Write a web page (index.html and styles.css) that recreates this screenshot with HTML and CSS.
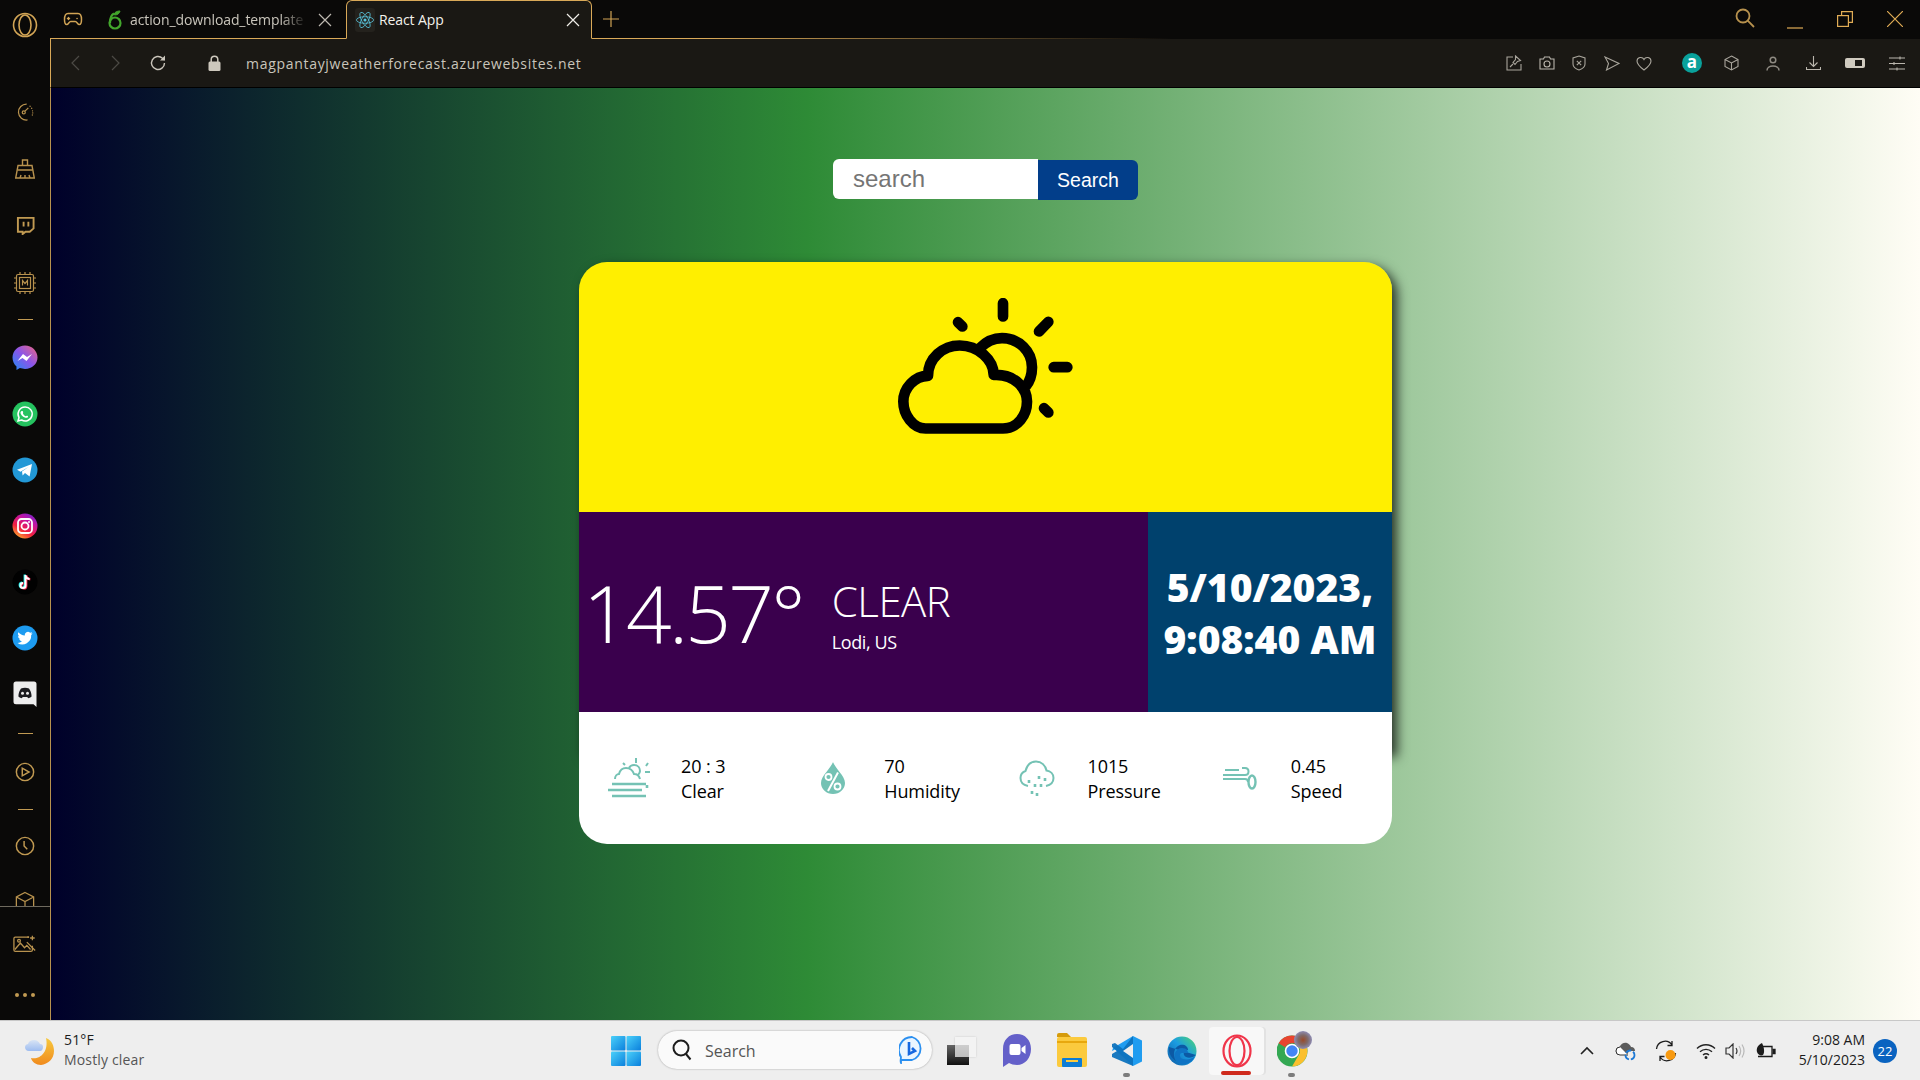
FILE: index.html
```html
<!DOCTYPE html>
<html lang="en">
<head>
<meta charset="utf-8">
<title>React App</title>
<link rel="stylesheet" href="styles.css">
</head>
<body>
<div class="desktop">
  <div class="browser">
    <aside class="sidebar">
      <div class="logo-cell">
        <svg width="26" height="26" viewBox="0 0 26 26" fill="none" stroke="#d1a455" stroke-width="1.6"><circle cx="13" cy="13" r="11.5"/><ellipse cx="13" cy="13" rx="6" ry="10"/></svg>
      </div>
      <div class="side-scroll">
        <div class="side-item tall"><svg width="20" height="20" viewBox="0 0 24 24" fill="none" stroke="#b8924e" stroke-width="1.5"><path d="M15 21.500A9.500 9.500 0 1 1 14 2.600"/><circle cx="10.500" cy="12.500" r="1.800"/><path d="M12 11l4-4"/><path d="M18 5l.1.1M20 7.500l.1.1M21 10.500v.1M21.300 13v.1M20.800 15.500v.1" stroke-linecap="round"/></svg></div>
        <div class="side-item tall"><svg width="20" height="20" viewBox="0 0 20 20" fill="none" stroke="#b8924e" stroke-width="1.400"><path d="M7.500 6V1h5v5M3 6.500h14l2.300 12.500H.7z"/><path d="M2.500 11h15M5 19l1-3M10 19v-3M15 19l-1-3"/></svg></div>
        <div class="side-item tall"><svg width="19" height="19" viewBox="0 0 20 20" fill="none" stroke="#c19a52" stroke-width="2"><path d="M2 2h16.500v11l-4 3.500H10L7 19v-2.500H2z"/><path d="M8 6v5M13 6v5"/></svg></div>
        <div class="side-item tall chip"><svg width="24" height="24" viewBox="0 0 24 24" fill="none" stroke="#b8924e" stroke-width="1.200"><rect x="3.500" y="3.500" width="17" height="17" rx="1.500"/><rect x="6.500" y="6.500" width="11" height="11"/><path d="M7 3.500V1M12 3.500V1M17 3.500V1M7 23v-2.500M12 23v-2.500M17 23v-2.500M3.500 7H1M3.500 12H1M3.500 17H1M23 7h-2.500M23 12h-2.500M23 17h-2.500M9.500 14.500v-5l2.500 3 2.500-3v5"/></svg></div>
        <div class="side-sep first"></div>
        <div class="side-item"><svg width="26" height="26" viewBox="0 0 26 26"><defs><linearGradient id="ms" x1="0" y1="1" x2="1" y2="0"><stop offset="0" stop-color="#1f8cf5"/><stop offset=".5" stop-color="#8a55ea"/><stop offset="1" stop-color="#f0667f"/></linearGradient></defs><path d="M13 .5C6 .5.5 5.500.5 12.500c0 3.600 1.500 6.800 4 9V25l3.400-1.900c1.600.5 3.300.8 5.100.8 7 0 12.500-5 12.500-11.400S20 .5 13 .5z" fill="url(#ms)"/><path d="M5.500 16l5.500-7 4 3 5-3-5.500 7-4-3z" fill="#fff"/></svg></div>
        <div class="side-item"><svg width="26" height="26" viewBox="0 0 26 26"><circle cx="13" cy="13" r="12.500" fill="#25c25f"/><path d="M13 6a7 7 0 0 0-6 10.500L6 20l3.600-1A7 7 0 1 0 13 6z" fill="none" stroke="#fff" stroke-width="1.500"/><path d="M10.300 10c1 0 1 2 .6 2.500.6 1.300 1.500 2.200 2.700 2.700.6-.6 1.300-.8 2.300-.2.5.8-.3 1.800-1.400 1.800-3 0-6-3-6-5.300 0-.8.800-1.500 1.800-1.500z" fill="#fff"/></svg></div>
        <div class="side-item"><svg width="26" height="26" viewBox="0 0 26 26"><circle cx="13" cy="13" r="12.500" fill="#2298d6"/><path d="M5 12.800L20 7l-2.400 12.500-4.600-3.400-2.400 2.300-.6-4L16.500 10l-8 4.800z" fill="#fff"/></svg></div>
        <div class="side-item"><svg width="26" height="26" viewBox="0 0 26 26"><defs><linearGradient id="ig" x1="0.200" y1="1" x2="0.800" y2="0"><stop offset="0" stop-color="#fdb32c"/><stop offset=".35" stop-color="#f3203f"/><stop offset=".7" stop-color="#c414a0"/><stop offset="1" stop-color="#7a25d0"/></linearGradient></defs><circle cx="13" cy="13" r="12.500" fill="url(#ig)"/><rect x="6" y="6" width="14" height="14" rx="3.500" fill="none" stroke="#fff" stroke-width="1.800"/><circle cx="13" cy="13" r="3.500" fill="none" stroke="#fff" stroke-width="1.800"/><circle cx="17" cy="9" r="1" fill="#fff"/></svg></div>
        <div class="side-item"><svg width="26" height="26" viewBox="0 0 26 26"><circle cx="13" cy="13" r="12.500" fill="#010101"/><path d="M13.500 6v10.500a2.500 2.500 0 1 1-2.500-2.500M13.500 6c.3 2.500 1.800 3.800 4 4" fill="none" stroke="#25f4ee" stroke-width="2.200" transform="translate(-.8 -.4)"/><path d="M13.500 6v10.500a2.500 2.500 0 1 1-2.500-2.500M13.500 6c.3 2.500 1.800 3.800 4 4" fill="none" stroke="#fe2c55" stroke-width="2.200" transform="translate(.8 .4)"/><path d="M13.500 6v10.500a2.500 2.500 0 1 1-2.500-2.500M13.500 6c.3 2.500 1.800 3.800 4 4" fill="none" stroke="#fff" stroke-width="2"/></svg></div>
        <div class="side-item"><svg width="26" height="26" viewBox="0 0 26 26"><circle cx="13" cy="13" r="12.500" fill="#1d9bf0"/><path d="M20.500 8.300c-.6.300-1.200.4-1.800.5.600-.4 1.100-1 1.400-1.700-.6.300-1.300.6-2 .7a3.100 3.100 0 0 0-5.300 2.800c-2.600-.1-4.900-1.400-6.400-3.300-.8 1.400-.4 3.200 1 4.100-.5 0-1-.1-1.400-.4 0 1.500 1.100 2.800 2.500 3.100-.5.100-.9.100-1.400 0 .4 1.200 1.500 2.100 2.900 2.200A6.300 6.300 0 0 1 5.500 18a8.900 8.900 0 0 0 13.700-7.900c.5-.5 1-1.100 1.300-1.800z" fill="#fff"/></svg></div>
        <div class="side-item"><svg width="24" height="26" viewBox="0 0 24 26"><path d="M3 .5h18A2.500 2.500 0 0 1 23.500 3v23l-3-2.800H3A2.500 2.500 0 0 1 .5 20.700V3A2.500 2.500 0 0 1 3 .5z" fill="#ededed"/><path d="M8 7.500c2.500-1 5.500-1 8 0 1.500 2 2.600 4.800 2.600 8-1.200 1-2.500 1.500-3.500 1.700l-.8-1.200H9.700l-.8 1.200c-1-.2-2.300-.7-3.500-1.700 0-3.200 1.100-6 2.600-8z" fill="#1c1c20"/><circle cx="9.500" cy="12.300" r="1.500" fill="#ededed"/><circle cx="14.500" cy="12.300" r="1.500" fill="#ededed"/></svg></div>
        <div class="side-sep wide"></div>
        <div class="side-item"><svg width="20" height="20" viewBox="0 0 22 22" fill="none" stroke="#c19a52" stroke-width="1.600"><circle cx="11" cy="11" r="9.500"/><path d="M8 6.800v8.400l7.500-4.200z"/></svg></div>
        <div class="side-sep mid"></div>
        <div class="side-item"><svg width="20" height="20" viewBox="0 0 22 22" fill="none" stroke="#c19a52" stroke-width="1.600"><circle cx="11" cy="11" r="9.500"/><path d="M10 5.500V11l3.500 3.500"/></svg></div>
        <div class="side-item"><svg width="20" height="22" viewBox="0 0 22 24" fill="none" stroke="#b8924e" stroke-width="1.400"><path d="M11 1.500l9.500 5V18L11 23l-9.500-5V6.500zM1.500 6.500L11 11.500l9.500-5M11 11.500V23"/></svg></div>
      </div>
      <div class="side-bottom">
        <div class="side-item"><svg width="24" height="20" viewBox="0 0 26 20" fill="none" stroke="#b8924e" stroke-width="1.400"><path d="M17 2.500H2.500A1.500 1.500 0 0 0 1 4v12.500A1.500 1.500 0 0 0 2.500 18h17a1.500 1.500 0 0 0 1.500-1.500V12"/><path d="M2 16l6-7 4.500 5 2.500-2.500 4 4.500"/><circle cx="6.500" cy="6.500" r="1.500"/><path d="M15 8l9 9M21 1v5M18.500 3.500h5M16.500 1.500v2M15.500 2.500h2"/></svg></div>
        <div class="dots"><i></i><i></i><i></i></div>
      </div>
    </aside>
    <div class="main">
      <header class="tabstrip">
        <div class="game-cell"><svg width="20" height="14" viewBox="0 0 20 14" fill="none" stroke="#d1a455" stroke-width="1.500"><path d="M5 1.500h10c2 0 3.500 2 3.500 6 0 2.500-.5 5-2.200 5-1.800 0-2.300-3-4-3H7.700c-1.700 0-2.200 3-4 3-1.700 0-2.200-2.500-2.200-5 0-4 1.500-6 3.500-6z"/><path d="M5.500 5.500v2M4.500 6.500h2M14 6.500h.1" stroke-linecap="round"/></svg></div>
        <div class="tab">
          <svg class="tab-fav" width="16" height="20" viewBox="0 0 16 20" fill="none" stroke="#43a62c" stroke-width="2.200"><circle cx="8" cy="13" r="5.500"/><path d="M3 13c0-5 1-8 4-9.500"/><path d="M7 4c1-2 3-3 6-3-.5 2.500-2.500 4-5.500 4z" fill="#43a62c" stroke-width="1"/></svg>
          <span class="tab-title fade">action_download_template</span>
          <svg class="tab-x" width="14" height="14" viewBox="0 0 14 14" stroke="#bdb9b1" stroke-width="1.200"><path d="M1 1l12 12M13 1L1 13"/></svg>
        </div>
        <div class="tab active">
          <span class="fav-box"><svg width="18" height="18" viewBox="-11.500 -10.230 23 20.460" fill="none" stroke="#58c4dc"><circle r="2" fill="#58c4dc" stroke="none"/><ellipse rx="11" ry="4.200"/><ellipse rx="11" ry="4.200" transform="rotate(60)"/><ellipse rx="11" ry="4.200" transform="rotate(120)"/></svg></span>
          <span class="tab-title light">React App</span>
          <svg class="tab-x" width="14" height="14" viewBox="0 0 14 14" stroke="#f0eee8" stroke-width="1.200"><path d="M1 1l12 12M13 1L1 13"/></svg>
        </div>
        <svg class="tab-plus" width="16" height="16" viewBox="0 0 16 16" stroke="#d1a455" stroke-width="1.200"><path d="M8 0v16M0 8h16"/></svg>
        <div class="win-controls">
          <svg width="20" height="20" viewBox="0 0 20 20" fill="none" stroke="#b8924e" stroke-width="1.800"><circle cx="8" cy="8" r="6.500"/><path d="M12.700 12.700L19 19"/></svg>
          <svg width="16" height="16" viewBox="0 0 16 16" stroke="#e0ac55" stroke-width="1.200"><path d="M0 15h16"/></svg>
          <svg width="16" height="16" viewBox="0 0 16 16" fill="none" stroke="#e0ac55" stroke-width="1.200"><rect x=".6" y="4.600" width="10.800" height="10.800"/><path d="M4.600 4.600V.6h10.800v10.800h-4"/></svg>
          <svg width="16" height="16" viewBox="0 0 16 16" stroke="#e0ac55" stroke-width="1.200"><path d="M0 0l16 16M16 0L0 16"/></svg>
        </div>
      </header>
      <nav class="toolbar">
        <svg class="nav-back" width="10" height="16" viewBox="0 0 10 16" fill="none" stroke="#4c4a45" stroke-width="1.200"><path d="M9 1L2 8l7 7"/></svg>
        <svg class="nav-fwd" width="10" height="16" viewBox="0 0 10 16" fill="none" stroke="#4c4a45" stroke-width="1.200"><path d="M1 1l7 7-7 7"/></svg>
        <svg class="nav-reload" width="18" height="18" viewBox="0 0 18 18" fill="none" stroke="#cbc6bc" stroke-width="1.400"><path d="M15.500 9a6.500 6.500 0 1 1-2-4.700L15.500 6"/><path d="M16 1.500V6.500h-5" fill="#cbc6bc" stroke="none"/></svg>
        <svg class="nav-lock" width="13" height="16" viewBox="0 0 13 16"><rect x="0.500" y="6.500" width="12" height="9.500" rx="1.500" fill="#cdc8bd"/><path d="M3.200 7V4.500a3.300 3.300 0 0 1 6.600 0V7" fill="none" stroke="#cdc8bd" stroke-width="1.500"/></svg>
        <span class="url">magpantayjweatherforecast.azurewebsites.net</span>
        <div class="tools">
          <svg width="16" height="16" viewBox="0 0 16 16" fill="none" stroke="#a9a59c" stroke-width="1.100"><path d="M7 2H1v13h14V9"/><path d="M9.500 1l5 4.500-3 1-2.500 3-2-2 2.500-3zM7 9l-3 3"/></svg>
          <svg width="16" height="14" viewBox="0 0 16 14" fill="none" stroke="#bab6ad" stroke-width="1.100"><path d="M1 3h3.500l1-2h5l1 2H15v10H1z"/><circle cx="8" cy="8" r="3"/></svg>
          <svg width="14" height="16" viewBox="0 0 14 16" fill="none" stroke="#a9a59c" stroke-width="1.100"><path d="M7 1l6 2v6c0 3-3 5-6 6-3-1-6-3-6-6V3z"/><path d="M4.800 5.800l4.400 4.400M9.200 5.800l-4.400 4.400"/></svg>
          <svg width="16" height="15" viewBox="0 0 16 15" fill="none" stroke="#a9a59c" stroke-width="1.100"><path d="M1 1l14 6.500L2.500 14 4.500 7.500z"/></svg>
          <svg width="16" height="15" viewBox="0 0 16 15" fill="none" stroke="#a9a59c" stroke-width="1.100"><path d="M8 14C4 11 1 8.500 1 5a3.700 3.700 0 0 1 7-1.500A3.700 3.700 0 0 1 15 5c0 3.500-3 6-7 9z"/></svg>
          <span class="ext-a">a</span>
          <svg width="15" height="16" viewBox="0 0 15 16" fill="none" stroke="#a9a59c" stroke-width="1.100"><path d="M7.500 1l6.500 3.500v7L7.500 15 1 11.500v-7zM1 4.500L7.500 8 14 4.500M7.500 8v7"/></svg>
          <svg width="14" height="15" viewBox="0 0 14 15" fill="none" stroke="#8e8a82" stroke-width="1.500"><circle cx="7" cy="4" r="2.800"/><path d="M1 14.500c0-6 12-6 12 0"/></svg>
          <svg width="15" height="16" viewBox="0 0 15 16" fill="none" stroke="#bab6ad" stroke-width="1.100"><path d="M7.500 1v10M3.500 7.500l4 4 4-4M.5 12v2.500h14V12"/></svg>
          <span class="battery"><i></i></span>
          <svg width="16" height="15" viewBox="0 0 16 15" fill="none" stroke="#bab6ad" stroke-width="1.100"><path d="M0 2h16M0 7.500h16M0 13h16M11 .5v3M5 6v3M8 11.500v3"/></svg>
        </div>
      </nav>
      <main class="page">
        <form class="search">
          <input class="search-input" type="text" placeholder="search">
          <button class="search-btn" type="button">Search</button>
        </form>
        <section class="card">
          <div class="card-hero">
            <svg width="175" height="136" viewBox="295 475 525 407" fill="none" stroke="#000" stroke-width="32" stroke-linecap="round"><path d="M378 866H610C655 866 682 825 682 785C682 745 645 705 590 705H582C582 660 535 617 480 617C430 617 385 655 385 708C345 708 311 745 311 785C311 825 340 866 378 866Z" stroke-linejoin="round"/><path d="M540 625C560 605 585 595 607 595C658 595 697 635 697 682C697 705 690 725 678 740" stroke-linecap="butt"/><path d="M610 490V530M475 547L488 560M746 546L718 575M762 682H803M733 805L746 818"/></svg>
          </div>
          <div class="card-mid">
            <div class="now">
              <span class="temp">14.57°</span>
              <div class="cond">
                <span class="cond-name">CLEAR</span>
                <span class="cond-place">Lodi, US</span>
              </div>
            </div>
            <div class="clock">5/10/2023,<br>9:08:40 AM</div>
          </div>
          <div class="card-stats">
            <div class="stat">
              <div class="stat-icon"><svg width="46" height="40" viewBox="0 0 46 40" fill="none" stroke="#74c2b4" stroke-width="2"><path d="M8 21c0-3 2-5 4-5 1-4 4-6 7-6 4 0 7 3 8 6 3 0 5 1 6 5"/><path d="M22 10c1-2 3-3 5-3 4 0 6 3 6 6 0 2-1 3-2 4"/><path d="M29 0v5M16 5l2 2M41 5l-2 3M38 14h5"/><path d="M5 26h34M1 32h34M5 38h34M40 27v3" stroke-width="2.600"/></svg></div>
              <div class="stat-text"><span>20 : 3</span><span>Clear</span></div>
            </div>
            <div class="stat">
              <div class="stat-icon"><svg width="24" height="32" viewBox="0 0 24 32"><path d="M12 0C10 6 0 14 0 21a12 11 0 0 0 24 0C24 14 14 6 12 0z" fill="#74c2b4"/><circle cx="7.500" cy="15" r="3" fill="none" stroke="#fff" stroke-width="1.800"/><circle cx="16.500" cy="24.500" r="3" fill="none" stroke="#fff" stroke-width="1.800"/><path d="M17 10.500L7 29" stroke="#fff" stroke-width="2"/></svg></div>
              <div class="stat-text"><span>70</span><span>Humidity</span></div>
            </div>
            <div class="stat">
              <div class="stat-icon"><svg width="36" height="36" viewBox="0 0 36 36" fill="none" stroke="#74c2b4" stroke-width="2"><path d="M9 26C4 25 1.500 22 1.500 18c0-3.500 2-6 5-7C8 5 12 1.500 17 1.500c5.500 0 9.500 4 10.500 9 4 .5 7 3.500 7 7.500 0 4-3 7-7.500 8"/><path d="M10 20v3M20 16v3M26 18v3M16 24v3M22 24v3M13 31v3M18 33v3" stroke-width="2.600"/></svg></div>
              <div class="stat-text"><span>1015</span><span>Pressure</span></div>
            </div>
            <div class="stat">
              <div class="stat-icon"><svg width="34" height="24" viewBox="0 0 34 24" fill="none" stroke="#74c2b4" stroke-width="2"><path d="M0 9h22c2.500 0 3.500-1.500 3.500-3.500S24 2 22 2h-3M2 4h14M0 13h22c2 0 3 1 3 3"/><ellipse cx="29" cy="16" rx="3.500" ry="6.500" stroke-width="2.400"/></svg></div>
              <div class="stat-text"><span>0.45</span><span>Speed</span></div>
            </div>
          </div>
        </section>
      </main>
    </div>
  </div>
  <footer class="taskbar">
    <div class="tb-weather">
      <svg width="30" height="30" viewBox="0 0 30 30"><defs><linearGradient id="moon" x1="0" y1="0" x2="0" y2="1"><stop offset="0" stop-color="#f7c93e"/><stop offset="1" stop-color="#f08a1d"/></linearGradient><linearGradient id="cl" x1="0" y1="0" x2="0" y2="1"><stop offset="0" stop-color="#d8e4f5"/><stop offset="1" stop-color="#9dbcf0"/></linearGradient></defs><path d="M21 2c6 2 8 8 8 13 0 8-6 13-13 14-5 0-9-3-10-7 9 2 18-6 15-20z" fill="url(#moon)"/><path d="M4 15C1 15 0 13 0 11c0-2 2-3 3-3 1-3 3-4 6-4 3 0 5 2 6 4 2 0 3 1 3 3s-1 4-3 4z" fill="url(#cl)"/></svg>
      <div class="tb-weather-text"><span class="tb-temp">51°F</span><span class="tb-desc">Mostly clear</span></div>
    </div>
    <svg class="tb-start" width="30" height="30" viewBox="0 0 30 30"><defs><linearGradient id="w1" x1="0" y1="0" x2="1" y2="1"><stop offset="0" stop-color="#4bd1fa"/><stop offset="1" stop-color="#0a7fdc"/></linearGradient></defs><rect x="0" y="0" width="14.500" height="14.500" rx="1" fill="url(#w1)"/><rect x="15.500" y="0" width="14.500" height="14.500" rx="1" fill="url(#w1)"/><rect x="0" y="15.500" width="14.500" height="14.500" rx="1" fill="url(#w1)"/><rect x="15.500" y="15.500" width="14.500" height="14.500" rx="1" fill="url(#w1)"/></svg>
    <div class="tb-search">
      <svg width="20" height="22" viewBox="0 0 20 22" fill="none" stroke="#1d1d1d" stroke-width="2"><circle cx="9" cy="9" r="7.500"/><path d="M14 15l4.500 5.500"/></svg>
      <span class="tb-search-text">Search</span>
      <svg class="tb-bing" width="26" height="28" viewBox="0 0 26 28" fill="none"><path d="M13 1a12 12 0 0 1 0 23H2v3c-1-1 0-5 0-6A13 13 0 0 1 13 1z" stroke="#2a8ff0" stroke-width="1.800" fill="#eaf5ff"/><path d="M10 6v12l6-3-3-3" stroke="#1668e0" stroke-width="2.600"/></svg>
    </div>
    <div class="tb-apps">
      <div class="tb-app"><span class="taskview"><i></i><b></b></span></div>
      <div class="tb-app"><svg width="30" height="36" viewBox="0 0 30 36"><path d="M15 1C7 1 1 7 1 16v18l6-4c2 1 5 2 8 2 8 0 14-7 14-16S23 1 15 1z" fill="#6460c9"/><rect x="7.500" y="11" width="11" height="11" rx="2" fill="#fff"/><path d="M19.500 15l4-3v9l-4-3z" fill="#fff"/></svg></div>
      <div class="tb-app"><svg width="30" height="36" viewBox="0 0 30 36"><path d="M0 2a2 2 0 0 1 2-2h8l4 4H0z" fill="#d59b0b"/><rect x="0" y="4" width="30" height="30" rx="2" fill="#fbca3e"/><path d="M0 8h30v2H0z" fill="#e8a80e"/><rect x="5" y="25" width="20" height="9" rx="1" fill="#0c7cd5"/><rect x="9" y="27" width="12" height="2" fill="#fbca3e"/></svg></div>
      <div class="tb-app has-dot"><svg width="30" height="30" viewBox="0 0 30 30"><path d="M21 0l9 4.500v21L21 30 3 13.500 0 15l1-3 20-12z" fill="#1f9cf0"/><path d="M21 0v30L0 21V18L5 15 0 11V8l3-1 8 6 10-13z" fill="#0d72bd" fill-opacity=".95"/><path d="M21 8L11 15l10 7z" fill="#eeeeee"/></svg></div>
      <div class="tb-app"><svg width="30" height="30" viewBox="0 0 30 30"><defs><linearGradient id="ed" x1="0" y1="1" x2="1" y2="0"><stop offset="0" stop-color="#0c59a4"/><stop offset=".55" stop-color="#1b9de2"/><stop offset="1" stop-color="#50d96c"/></linearGradient></defs><circle cx="15" cy="15" r="14.500" fill="url(#ed)"/><path d="M29 19c-3 3-10 4-12 0-1-3 1-5 4-5 0-4-4-6-8-5-6 2-8 10-4 16-4-2-8-8-7-14" fill="#0c59a4"/><path d="M15 12c5 0 6 3 6 5h-6c-3 0-3 5 1 6 4 1 9 0 12-3-2 6-8 9-14 8-5-2-7-7-6-11 1-3 4-5 7-5z" fill="#0f73c4"/></svg></div>
      <div class="tb-app opera"><svg width="30" height="34" viewBox="0 0 30 34" fill="none" stroke="#f0354a" stroke-width="2.200"><ellipse cx="15" cy="17" rx="13.500" ry="15.500"/><ellipse cx="15" cy="17" rx="7.500" ry="14"/></svg><i class="run-bar"></i></div>
      <div class="tb-app has-dot"><svg class="chrome" width="36" height="40" viewBox="0 5 36 40"><defs><radialGradient id="av"><stop offset="0" stop-color="#9a4a2a"/><stop offset=".55" stop-color="#7f6a6a"/><stop offset="1" stop-color="#8f8db5"/></radialGradient></defs><circle cx="15" cy="25" r="15.500" fill="#34a853"/><path d="M15 9.500a15.500 15.500 0 0 1 13.400 7.800H15a7.700 7.700 0 0 0-6.700 3.900L1.600 17.300A15.500 15.500 0 0 1 15 9.500z" fill="#e8442f"/><path d="M28.400 17.300A15.500 15.500 0 0 1 15 40.500l6.700-11.600A7.700 7.700 0 0 0 22 21z" fill="#fbc02d"/><circle cx="15" cy="25" r="6.500" fill="#4285f4" stroke="#fff" stroke-width="1.600"/><circle cx="26" cy="14" r="9" fill="url(#av)"/></svg></div>
    </div>
    <div class="tray">
      <svg width="14" height="9" viewBox="0 0 14 9" fill="none" stroke="#222" stroke-width="1.600"><path d="M1 8l6-6 6 6"/></svg>
      <svg class="t-cloud" width="22" height="20" viewBox="0 0 22 20"><path d="M5 14a4 4 0 0 1-.5-8C6 2 10 1 12 2c2 1 3.500 2 4 4 3 0 4 2 4 4H14l-2 4z" fill="#5c5c5c"/><path d="M5 6a4 4 0 0 0 0 8h8" fill="#fff" stroke="#333"/><circle cx="15" cy="14" r="4.500" fill="none" stroke="#1b78d6" stroke-width="1.800" stroke-dasharray="6 2"/></svg>
      <svg class="t-sync" width="22" height="22" viewBox="0 0 22 22"><path d="M1.500 9A8.500 8.500 0 0 1 17 5M17 1v4.500h-4.500M20.500 13A8.500 8.500 0 0 1 5 17M5 21v-4.500h4.500" fill="none" stroke="#1c1c1c" stroke-width="1.300"/><circle cx="15.500" cy="15" r="5" fill="#f89a10"/></svg>
      <svg class="t-wifi" width="20" height="16" viewBox="0 0 20 16" fill="none" stroke="#222" stroke-width="1.400"><path d="M1 5.500c5-5 13-5 18 0M4 8.800c3.500-3.300 8.500-3.300 12 0M7 12c1.800-1.500 4.200-1.500 6 0"/><circle cx="10" cy="14.500" r=".8" fill="#222"/></svg>
      <svg class="t-sound" width="20" height="16" viewBox="0 0 20 16" fill="none" stroke="#333" stroke-width="1.200"><path d="M1 5h3l4-4v14l-4-4H1zM11 5c1.300 2 1.300 4 0 6"/><path d="M14 3c2 3 2 7 0 10M17 1.500c2.500 4 2.500 9 0 13" stroke="#b8b8b8"/></svg>
      <svg class="t-batt" width="20" height="16" viewBox="0 0 20 16" fill="none" stroke="#1c1c1c" stroke-width="1.300"><path d="M4 3.500h12v10H2"/><path d="M16.500 6.500h2.500v4h-2.500" fill="#1c1c1c"/><path d="M6 0C2 2 0 5 1 9c1 3 4 4 6 3 2-3 1-8-1-12z" fill="#1c1c1c" stroke="none"/></svg>
      <div class="tb-clock"><span>9:08 AM</span><span>5/10/2023</span></div>
      <span class="tb-badge">22</span>
    </div>
  </footer>
</div>
</body>
</html>
```

FILE: styles.css
```css
* { box-sizing: border-box; }
html, body { margin: 0; height: 100%; }
body { font-family: "Open Sans", "Noto Sans", sans-serif; overflow: hidden; }
svg { display: block; flex: none; }

.desktop { width: 1920px; height: 1080px; display: flex; flex-direction: column; background: #0a0908; }
.browser { flex: none; height: 1020px; display: flex; }

/* sidebar */
.sidebar { flex: none; width: 50px; display: flex; flex-direction: column; }
.logo-cell { flex: none; height: 84px; padding-top: 12px; display: flex; justify-content: center; }
.side-scroll { flex: none; height: 823px; overflow: hidden; border-bottom: 1px solid #6f6a5e; }
.side-item { height: 56px; display: flex; align-items: center; justify-content: center; }
.side-item.tall { height: 56.500px; }
.side-item.chip svg { margin-top: 2px; }
.side-sep { width: 15px; height: 1px; background: #c19a52; margin: 0 auto; }
.side-sep.first { margin-top: 9px; margin-bottom: 10px; }
.side-sep.wide { margin-top: 11px; margin-bottom: 10px; }
.side-sep.mid { margin-top: 9px; margin-bottom: 8px; }
.side-bottom { flex: 1; display: flex; flex-direction: column; align-items: center; padding-top: 9px; }
.dots { display: flex; gap: 4px; margin-top: 21px; }
.dots i { width: 4px; height: 4px; border-radius: 50%; background: #c19a52; }

.main { flex: 1; display: flex; flex-direction: column; min-width: 0; }

/* tab strip */
.tabstrip { flex: none; height: 39px; display: flex; align-items: center; position: relative; border-bottom: 1px solid; border-image: linear-gradient(90deg, #d9a958 0, #d9a958 35%, transparent 60%) 1; }
.game-cell { flex: none; width: 37px; padding-left: 13px; }
.tab { flex: none; height: 39px; align-self: flex-start; display: flex; align-items: center; color: #c9c5bb; font-size: 14px; letter-spacing: -.1px; }
.tab:not(.active) { width: 259px; padding-left: 20px; }
.tab-fav { margin-right: 7px; }
.tab-title { flex: 1; white-space: nowrap; overflow: hidden; }
.tab-title.fade { -webkit-mask-image: linear-gradient(90deg, #000 85%, transparent); mask-image: linear-gradient(90deg, #000 85%, transparent); }
.tab-x { margin-left: 11px; margin-right: 14px; }
.tab.active { width: 246px; padding-left: 8px; background: #1a1814; border: 1px solid #d9a958; border-bottom-color: #1a1814; border-radius: 6px 6px 0 0; color: #f4f2ec; }
.fav-box { width: 20px; height: 24px; display: flex; align-items: center; justify-content: center; margin-right: 4px; background: #24221d; border-radius: 3px; }
.tab.active .tab-x { margin-right: 11px; }
.tab-plus { margin-left: 11px; }
.win-controls { margin-left: auto; display: flex; align-items: center; }
.win-controls svg:nth-child(1) { margin-right: 32px; margin-top: -2px; }
.win-controls svg:nth-child(2) { margin-right: 34px; margin-top: 4px; }
.win-controls svg:nth-child(3) { margin-right: 34px; margin-top: -1px; }
.win-controls svg:nth-child(4) { margin-right: 17px; margin-top: -1px; }

/* toolbar */
.toolbar { flex: none; height: 49px; display: flex; align-items: center; background: #1a1814; border-left: 1px solid #d9a958; border-bottom: 1px solid #000; color: #c9c5bb; }
.nav-back { margin-left: 19px; }
.nav-fwd { margin-left: 31px; }
.nav-reload { margin-left: 28px; }
.nav-lock { margin-left: 41px; }
.url { margin-left: 25px; font-size: 14px; letter-spacing: .7px; white-space: nowrap; }
.tools { margin-left: auto; margin-right: 15px; display: flex; align-items: center; }
.tools > :nth-child(2) { margin-left: 17px; }
.tools > :nth-child(3) { margin-left: 17px; }
.tools > :nth-child(4) { margin-left: 18px; }
.tools > :nth-child(5) { margin-left: 16px; }
.tools > :nth-child(7) { margin-left: 22px; }
.tools > :nth-child(8) { margin-left: 27px; }
.tools > :nth-child(9) { margin-left: 26px; }
.tools > :nth-child(11) { margin-left: 24px; }
.tools .ext-a { width: 20px; height: 20px; border-radius: 50%; background: #0aa19b; color: #fff; font-weight: 700; font-size: 17px; line-height: 18px; text-align: center; margin-left: 30px; }
.battery { width: 20px; height: 10px; background: #cfcabf; border-radius: 2px; position: relative; margin-left: 24px; }
.battery i { position: absolute; left: 10px; top: 2px; width: 7px; height: 6px; background: #1a1814; }

/* page */
.page { flex: 1; min-height: 0; border-left: 1px solid #b8924e; background: linear-gradient(90deg, #00002a 0%, #2e8b36 40.500%, #fffdf5 100%); display: flex; flex-direction: column; align-items: center; }
.search { display: flex; margin-top: 71px; }
.search-input { width: 205px; height: 40px; border: 0; border-radius: 6px 0 0 6px; background: #fff; padding: 0 0 0 20px; font: 24px "Liberation Sans", Arial, sans-serif; outline: 0; }
.search-input::placeholder { color: #757575; opacity: 1; }
.search-btn { width: 100px; height: 40px; margin-top: 1px; border: 0; border-radius: 0 6px 6px 0; background: #023e8a; color: #fff; font: 19.500px "Liberation Sans", Arial, sans-serif; padding: 0; }

.card { width: 813px; height: 490px; margin-top: 62px; border-radius: 28px 28px 0 0; box-shadow: 5px 5px 12px rgba(0,0,0,.75); flex: none; }
.card-hero { height: 250px; background: #ffef00; border-radius: 28px 28px 0 0; padding: 36px 0 0 319px; }
.card-mid { height: 200px; display: flex; color: #fff; }
.now { width: 569px; background: #3a004d; display: flex; align-items: center; padding-left: 4px; }
.temp { font-size: 80px; font-weight: 300; letter-spacing: -2.700px; line-height: 1; }
.cond { display: flex; flex-direction: column; margin-left: 29px; padding-top: 7px; font-weight: 300; }
.cond-name { font-size: 42px; line-height: 49px; letter-spacing: -.5px; }
.cond-place { font-size: 18px; line-height: 26px; margin-top: 4px; font-weight: 400; letter-spacing: -.4px; }
.clock { flex: 1; background: #00416d; display: flex; align-items: center; justify-content: center; padding-top: 1px; text-align: center; font-size: 39px; line-height: 52px; font-weight: 800; }

.card-stats { height: 132px; background: #fff; border-radius: 0 0 28px 28px; display: flex; align-items: center; color: #000; }
.stat { width: 25%; display: flex; align-items: center; }
.stat-icon { width: 102px; display: flex; justify-content: center; }
.stat-text { display: flex; flex-direction: column; padding-top: 2px; font-size: 18px; line-height: 25px; letter-spacing: -.1px; }

/* taskbar */
.taskbar { flex: none; height: 60px; background: #eeeeee; border-top: 1px solid #c8c8c8; display: flex; align-items: center; }
.tb-weather { flex: none; width: 611px; display: flex; align-items: center; padding-left: 25px; }
.tb-weather-text { display: flex; flex-direction: column; margin-left: 9px; margin-top: -2px; font-size: 14px; line-height: 19.500px; letter-spacing: .15px; }
.tb-temp { color: #1c1c1c; }
.tb-desc { color: #555; }
.tb-start { margin-right: 17px; }
.tb-search { flex: none; width: 274px; height: 38px; margin-top: -1px; background: #fafafa; border-radius: 19px; box-shadow: 0 0 2px rgba(0,0,0,.35); display: flex; align-items: center; padding-left: 14px; }
.tb-search-text { margin-left: 13px; margin-top: 1px; font-size: 16px; color: #555; }
.tb-bing { margin-left: auto; margin-right: 7px; }
.tb-apps { flex: none; display: flex; margin-left: 2px; }
.tb-app { width: 55px; height: 48px; display: flex; align-items: center; justify-content: center; position: relative; }
.tb-app.has-dot::after { content: ""; position: absolute; left: 24px; bottom: -2px; width: 7px; height: 4px; border-radius: 2px; background: #7c7c7c; }
.tb-app.opera { background: #f8f8f8; box-shadow: 2px 0 0 #e2e2e2; border-radius: 4px; }
.run-bar { position: absolute; left: 12px; bottom: 0; width: 30px; height: 4px; border-radius: 2px; background: #cf2a1d; }
.chrome { margin-left: 7px; }
.taskview { width: 29px; height: 28px; position: relative; display: block; }
.taskview i { position: absolute; left: 0; bottom: 0; width: 22px; height: 20px; background: linear-gradient(#666, #111); }
.taskview b { position: absolute; right: 0; top: 0; width: 21px; height: 20px; background: rgba(245,245,245,.72); box-shadow: 0 0 2px rgba(0,0,0,.15); }
.tray { flex: 1; display: flex; align-items: center; }
.tray > svg:first-child { margin-left: 261px; }
.t-cloud { margin-left: 21px; }
.t-sync { margin-left: 18px; }
.t-wifi { margin-left: 19px; }
.t-sound { margin-left: 9px; }
.t-batt { margin-left: 11px; }
.tb-clock { margin-left: auto; margin-top: -2px; display: flex; flex-direction: column; align-items: flex-end; font-size: 14px; line-height: 20px; color: #1c1c1c; }
.tb-badge { width: 24px; height: 24px; border-radius: 50%; background: #0a63c0; color: #fff; font-size: 13px; line-height: 24px; text-align: center; margin-left: 8px; margin-right: 23px; }
```
